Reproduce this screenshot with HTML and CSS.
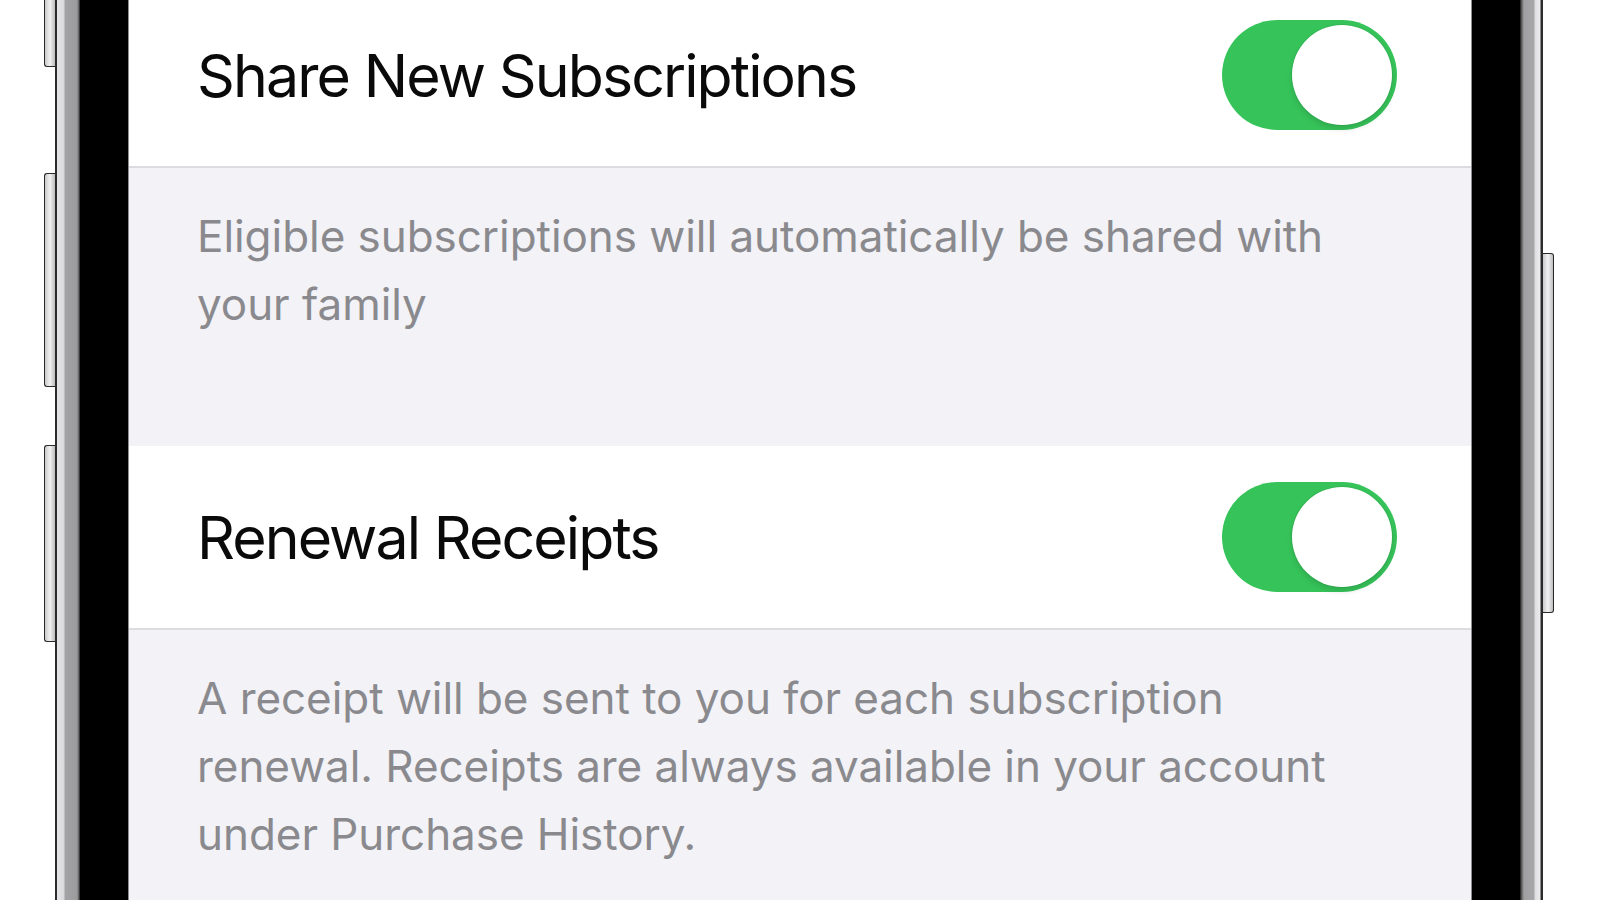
FILE: index.html
```html
<!DOCTYPE html>
<html lang="en">
<head>
<meta charset="utf-8">
<title>Subscriptions</title>
<link rel="stylesheet" href="styles.css">
</head>
<body>
<div class="stage">
  <div class="rail rail-left">
    <div class="btn btn-l btn-1"></div>
    <div class="btn btn-l btn-2"></div>
    <div class="btn btn-l btn-3"></div>
  </div>
  <div class="frame frame-left"></div>
  <div class="bezel"></div>
  <main class="screen">
    <div class="row row-first">
      <span class="label">Share New Subscriptions</span>
      <div class="toggle on"><div class="knob"></div></div>
    </div>
    <div class="footer footer-1">
      <p>Eligible subscriptions will automatically be shared with your family</p>
    </div>
    <div class="row">
      <span class="label">Renewal Receipts</span>
      <div class="toggle on"><div class="knob"></div></div>
    </div>
    <div class="footer">
      <p>A receipt will be sent to you for each subscription renewal. Receipts are always available in your account under Purchase History.</p>
    </div>
  </main>
  <div class="bezel"></div>
  <div class="frame frame-right"></div>
  <div class="rail rail-right">
    <div class="btn btn-r"></div>
  </div>
</div>
</body>
</html>
```

FILE: styles.css
```css
html, body {
  margin: 0;
  padding: 0;
  background: #ffffff;
}

.stage {
  display: flex;
  width: 1600px;
  height: 900px;
  overflow: hidden;
  font-family: Inter, "Noto Sans", sans-serif;
}

.rail {
  display: flex;
  flex-direction: column;
  flex: none;
}

.rail-left {
  width: 55px;
  align-items: flex-end;
}

.rail-right {
  width: 55px;
  align-items: flex-start;
}

.btn {
  border: 1.5px solid #2a2a2a;
  background: linear-gradient(90deg, #c9c9cc 0%, #f2f2f2 50%, #bdbdc0 100%);
  box-sizing: border-box;
}

.btn-l {
  border-right: none;
  border-radius: 3px 0 0 3px;
  width: 11px;
}

.btn-r {
  border-left: none;
  border-radius: 0 3px 3px 0;
  width: 11px;
  height: 360px;
  margin-top: 253px;
  margin-left: -2px;
}

.btn-1 {
  height: 71px;
  margin-top: -4px;
}

.btn-2 {
  height: 214px;
  margin-top: 106px;
}

.btn-3 {
  height: 197px;
  margin-top: 58px;
}

.frame {
  flex: none;
  width: 25px;
}

.frame-left {
  background: linear-gradient(90deg,
    #2b2b2b 0px, #2b2b2b 2px,
    #e6e6e8 2px, #d9d9db 9px,
    #a3a3a5 10px, #9c9c9e 22px,
    #5a5a5a 24px, #1a1a1a 25px);
}

.frame-right {
  background: linear-gradient(90deg,
    #1a1a1a 0px, #6a6a6a 2px,
    #a0a0a2 4px, #a7a7a9 14px,
    #dedee0 15px, #ececee 20px,
    #2b2b2b 21px, #2b2b2b 23px,
    #ffffff 23px);
}

.bezel {
  flex: none;
  width: 48px;
  background: #000000;
}

.screen {
  flex: none;
  width: 1344px;
  background: #f2f2f7;
  display: flex;
  flex-direction: column;
  border-left: 1px solid #8e8e8e;
  border-right: 1px solid #8e8e8e;
  box-sizing: border-box;
}

.row {
  flex: none;
  height: 184px;
  background: #ffffff;
  display: flex;
  align-items: center;
  justify-content: space-between;
  padding: 0 74px 0 68px;
  border-bottom: 2px solid #dcdce0;
  box-sizing: border-box;
}

.row-first {
  margin-top: -16px;
}

.label {
  font-size: 59px;
  color: #0a0a0a;
  letter-spacing: -1.9px;
}

.toggle {
  width: 175px;
  height: 110px;
  border-radius: 55px;
  background: #36c45a;
  display: flex;
  align-items: center;
  justify-content: flex-end;
  padding: 0 5px;
  box-sizing: border-box;
}

.knob {
  width: 100px;
  height: 100px;
  border-radius: 50%;
  background: #ffffff;
  box-shadow: 0 0 0 1px rgba(0, 0, 0, 0.06), 0 4px 6px rgba(0, 0, 0, 0.12);
}

.footer {
  flex: none;
  padding: 34px 94px 0 68px;
  box-sizing: border-box;
}

.footer-1 {
  height: 278px;
}

.footer p {
  margin: 0;
  font-size: 44px;
  line-height: 68px;
  color: #8a8a8e;
  letter-spacing: -0.05px;
}
```
